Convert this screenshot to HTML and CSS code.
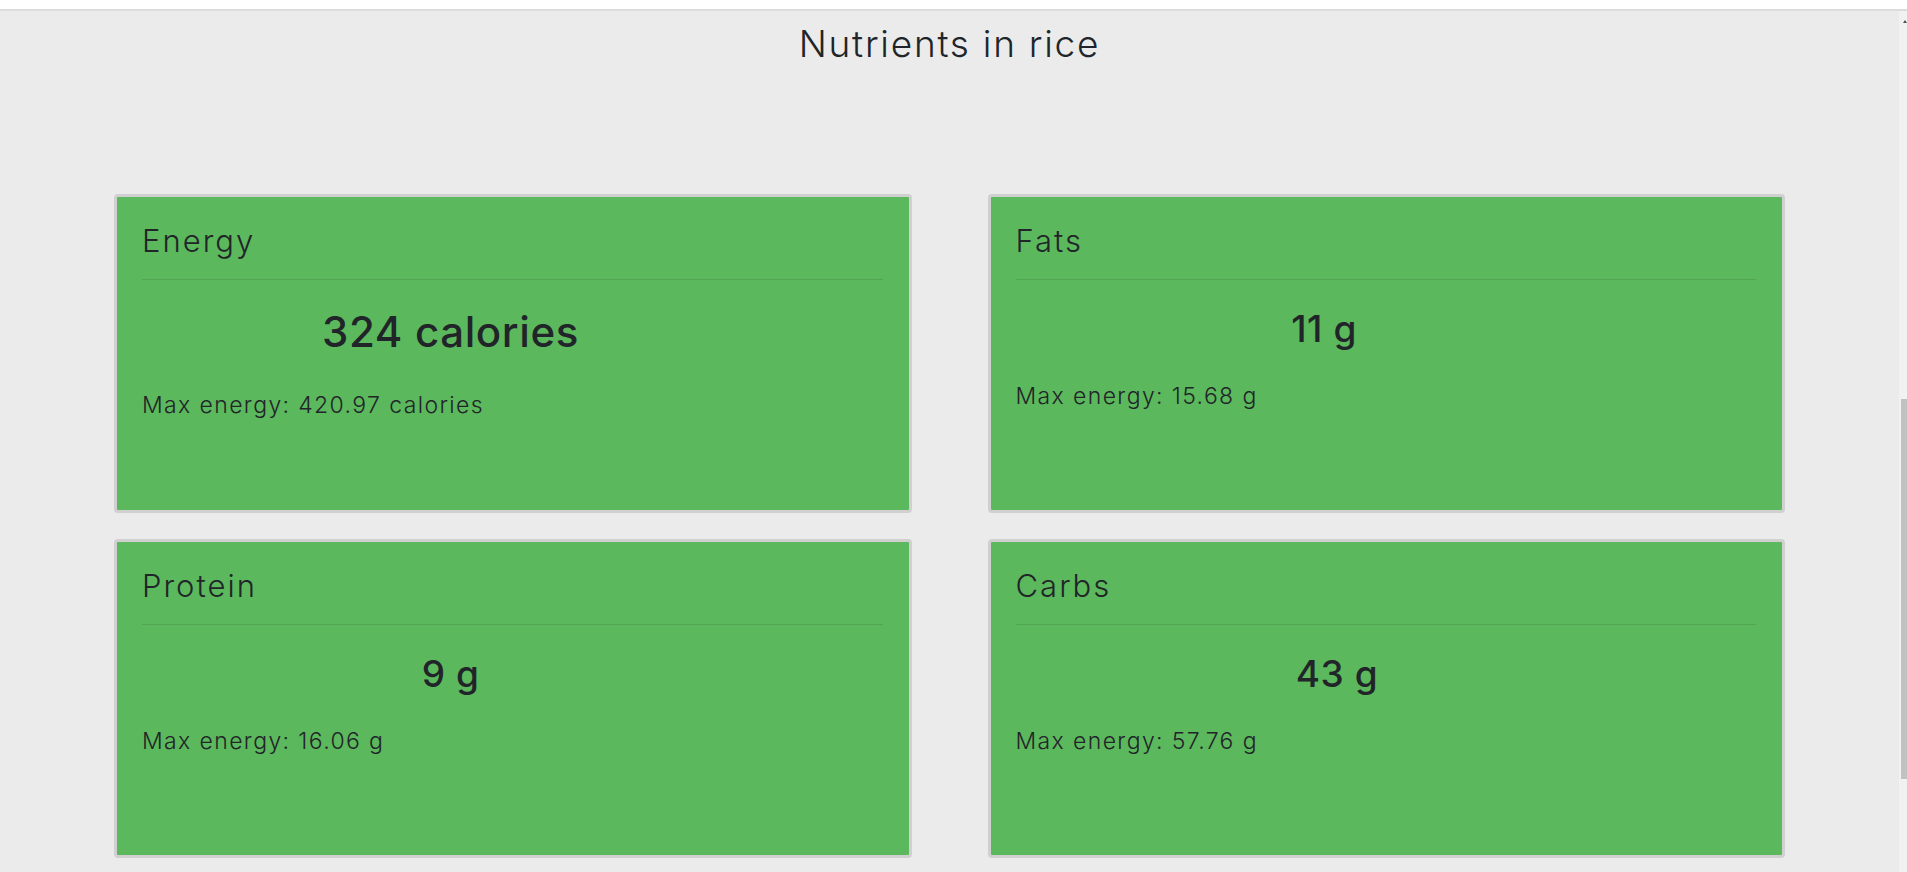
FILE: index.html
```html
<!DOCTYPE html>
<html lang="en">
<head>
<meta charset="utf-8">
<title>Nutrients in rice</title>
<link rel="stylesheet" href="styles.css">
</head>
<body>
<div class="topstrip"></div>
<div class="frame">
  <main class="content">
    <h1 class="page-title">Nutrients in rice</h1>
    <div class="grid">
      <section class="card">
        <h2 class="card-title">Energy</h2>
        <hr class="divider">
        <div class="value value-lg">324 calories</div>
        <p class="max">Max energy: 420.97 calories</p>
      </section>
      <section class="card">
        <h2 class="card-title">Fats</h2>
        <hr class="divider">
        <div class="value">11 g</div>
        <p class="max">Max energy: 15.68 g</p>
      </section>
      <section class="card">
        <h2 class="card-title">Protein</h2>
        <hr class="divider">
        <div class="value">9 g</div>
        <p class="max">Max energy: 16.06 g</p>
      </section>
      <section class="card">
        <h2 class="card-title">Carbs</h2>
        <hr class="divider">
        <div class="value value-shift">43 g</div>
        <p class="max">Max energy: 57.76 g</p>
      </section>
    </div>
  </main>
  <div class="scrollbar">
    <span class="arrow"></span>
    <div class="thumb"></div>
  </div>
</div>
</body>
</html>
```
FILE: styles.css
```css
html, body {
  margin: 0;
  height: 100%;
  overflow: hidden;
}
body {
  display: flex;
  flex-direction: column;
  background: #ffffff;
  font-family: Inter, "Noto Sans", sans-serif;
  color: #212529;
}
.topstrip {
  height: 9px;
  flex: none;
  background: #ffffff;
}
.frame {
  flex: 1;
  min-height: 0;
  display: flex;
  border-top: 2px solid #dcdcdc;
  background: #ebebeb;
}
.content {
  flex: 1;
  min-width: 0;
}
.page-title {
  margin: 0;
  padding-top: 11px;
  font-size: 37px;
  line-height: 44px;
  font-weight: 300;
  letter-spacing: 0.047em;
  text-align: center;
}
.grid {
  display: grid;
  grid-template-columns: 1fr 1fr;
  column-gap: 76px;
  row-gap: 26px;
  padding: 0 114px;
  margin-top: 128px;
}
.card {
  box-sizing: border-box;
  height: 319px;
  border: 3px solid #d0d0d0;
  border-radius: 4px;
  background: #5cb85c;
  padding: 25px 26px 0 25px;
}
.card-title {
  margin: 0;
  font-size: 31px;
  line-height: 37px;
  font-weight: 300;
  letter-spacing: 0.065em;
}
.divider {
  margin: 20px 0 0;
  height: 0;
  border: 0;
  border-top: 1px solid rgba(0, 0, 0, 0.1);
}
.value {
  width: 83.333%;
  margin: 27px 0 27.5px;
  text-align: center;
  font-size: 37px;
  line-height: 44px;
  font-weight: 500;
  letter-spacing: 0.015em;
}
.value-lg {
  font-size: 42px;
  line-height: 50px;
  margin-bottom: 30.5px;
}
.value-shift {
  padding-left: 26px;
  box-sizing: border-box;
}
.max {
  margin: 0;
  font-size: 23px;
  line-height: 34px;
  font-weight: 300;
  letter-spacing: 0.06em;
}
.scrollbar {
  width: 8px;
  flex: none;
  display: flex;
  flex-direction: column;
  align-items: flex-end;
  background: #f1f1f1;
}
.arrow {
  display: block;
  width: 0;
  height: 0;
  margin-top: 9px;
  border-left: 2px solid transparent;
  border-right: 2px solid transparent;
  border-bottom: 3px solid #505050;
}
.thumb {
  width: 6px;
  height: 380px;
  margin-top: 376px;
  background: #c1c1c1;
}
```
